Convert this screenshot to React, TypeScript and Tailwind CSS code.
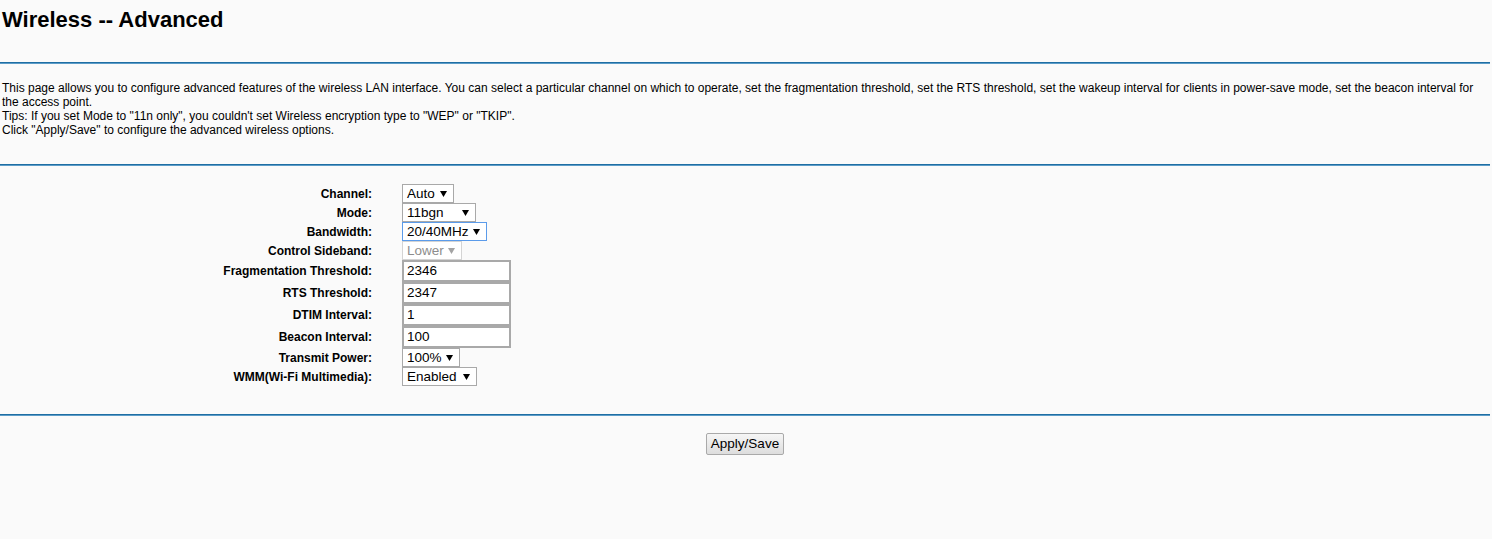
import React from 'react';

const Arrow = ({ disabled }: { disabled?: boolean }) => (
    <svg width="7" height="6" viewBox="0 0 7 6" className={disabled ? 'fill-[#a3a3a3]' : 'fill-black'}>
        <path d="M0 0H7L3.5 6Z" />
    </svg>
);

interface SelectBoxProps {
    value: string;
    widthClass: string;
    focused?: boolean;
    disabled?: boolean;
}

const SelectBox: React.FC<SelectBoxProps> = ({ value, widthClass, focused, disabled }) => {
    let look = 'border-[#a9a9a9] text-black';
    if (focused) look = 'border-[#5b9bea] text-black';
    if (disabled) look = 'border-[#d4d4d4] text-[#8d8d8d]';
    return (
        <div className={`flex h-[19px] items-center justify-between border bg-white pl-[4px] pr-[6px] text-[13.5px] leading-none ${look} ${widthClass}`}>
            <span>{value}</span>
            <Arrow disabled={disabled} />
        </div>
    );
};

const TextBox = ({ value }: { value: string }) => (
    <div className="flex h-[22px] w-[109px] items-center border-2 border-[#a9a9a9] bg-white pl-[3px] text-[13.5px] leading-none text-black">
        {value}
    </div>
);

const Rule = () => (
    <div className="h-[2px] w-[1490px] border-t border-b border-t-[#1f6ea3] border-b-[#5c9cc7]" />
);

const Row = ({ label, children }: { label: string; children: React.ReactNode }) => (
    <div className="flex items-center">
        <div className="w-[372px] -translate-y-[0.5px] text-right text-[12px] font-bold leading-[14px]">{label}</div>
        <div className="pl-[30px]">{children}</div>
    </div>
);

export default function App() {
    return (
        <div className="min-h-[539px] w-full bg-[#fafafa] font-['Liberation_Sans',Arial,sans-serif] text-black">
            <h1 className="px-[2px] pt-[7px] text-[22px] font-bold leading-[25px]">Wireless -- Advanced</h1>

            <div className="mt-[30px]">
                <Rule />
            </div>

            <div className="mt-[17px] w-[1490px] px-[2px] text-[12px] leading-[14px]">
                <p>
                    This page allows you to configure advanced features of the wireless LAN interface. You can select a particular channel on which to operate, set the fragmentation threshold, set the RTS threshold, set the wakeup interval for clients in power-save mode, set the beacon interval for the access point.
                </p>
                <p>Tips: If you set Mode to "11n only", you couldn't set Wireless encryption type to "WEP" or "TKIP".</p>
                <p>Click "Apply/Save" to configure the advanced wireless options.</p>
            </div>

            <div className="mt-[27px]">
                <Rule />
            </div>

            <div className="mt-[18px] flex flex-col">
                <Row label="Channel:">
                    <SelectBox value="Auto" widthClass="w-[52px]" />
                </Row>
                <Row label="Mode:">
                    <SelectBox value="11bgn" widthClass="w-[74px]" />
                </Row>
                <Row label="Bandwidth:">
                    <SelectBox value="20/40MHz" widthClass="w-[85px]" focused />
                </Row>
                <Row label="Control Sideband:">
                    <SelectBox value="Lower" widthClass="w-[60px]" disabled />
                </Row>
                <Row label="Fragmentation Threshold:">
                    <TextBox value="2346" />
                </Row>
                <Row label="RTS Threshold:">
                    <TextBox value="2347" />
                </Row>
                <Row label="DTIM Interval:">
                    <TextBox value="1" />
                </Row>
                <Row label="Beacon Interval:">
                    <TextBox value="100" />
                </Row>
                <Row label="Transmit Power:">
                    <SelectBox value="100%" widthClass="w-[58px]" />
                </Row>
                <Row label="WMM(Wi-Fi Multimedia):">
                    <SelectBox value="Enabled" widthClass="w-[75px]" />
                </Row>
            </div>

            <div className="mt-[28px]">
                <Rule />
            </div>

            <div className="mt-[17px] flex w-[1490px] justify-center">
                <button className="h-[22px] w-[78px] rounded-[2px] border border-[#a9a9a9] bg-gradient-to-b from-[#f6f6f6] to-[#dddddd] text-[13.5px] leading-none text-black">
                    Apply/Save
                </button>
            </div>
        </div>
    );
}
